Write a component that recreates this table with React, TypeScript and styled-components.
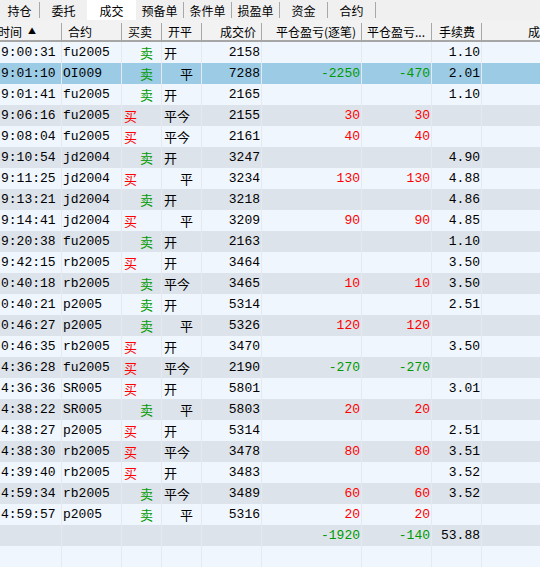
import React from "react";
import styled, { createGlobalStyle } from "styled-components";

const Global = createGlobalStyle`
  html, body { margin: 0; padding: 0; background: #ffffff; overflow: hidden; }
  body { width: 540px; height: 567px; }
`;

const Page = styled.div`
  width: 540px;
  height: 567px;
  overflow: hidden;
  display: flex;
  flex-direction: column;
  background: #f0f6fd;
`;

const TabBar = styled.div`
  display: flex;
  align-items: stretch;
  height: 21px;
  background: #f0f0f0;
  font-family: "Noto Sans CJK SC", sans-serif;
  font-size: 12px;
  color: #000;
`;

const Tab = styled.div<{ $w: number; $active?: boolean }>`
  width: ${(p) => p.$w}px;
  flex: none;
  display: flex;
  align-items: center;
  justify-content: center;
  background: ${(p) => (p.$active ? "#ffffff" : "transparent")};
  padding-top: 1px;
`;

const TabSep = styled.div`
  width: 1px;
  flex: none;
  align-self: center;
  height: 16px;
  margin-top: 1px;
  background: #a8a8a8;
`;

const COLS = "62px 60px 40px 40px 60px 100px 70px 50px 1fr";

const Header = styled.div`
  display: grid;
  grid-template-columns: ${COLS};
  height: 22px;
  padding-top: 0;
  background: #f2f2f2;
  border-bottom: 2px solid #a6a6a6;
  font-family: "Noto Sans CJK SC", sans-serif;
  font-size: 12px;
  color: #000;
`;

const HCell = styled.div<{ $align?: "left" | "right"; $pl?: number; $pr?: number }>`
  display: flex;
  align-items: center;
  justify-content: ${(p) => (p.$align === "right" ? "flex-end" : "flex-start")};
  padding-left: ${(p) => p.$pl ?? 6}px;
  padding-right: ${(p) => p.$pr ?? 5}px;
  margin-top: 3px;
  border-right: 1px solid #a8a8a8;
  white-space: nowrap;
  overflow: hidden;
  &:last-child { border-right: none; }
`;

const SortArrow = styled.span`
  font-size: 8px;
  margin-left: 6px;
  margin-top: -2px;
`;

const Body = styled.div`
  display: flex;
  flex-direction: column;
`;

const Row = styled.div<{ $alt: boolean; $sel?: boolean }>`
  display: grid;
  grid-template-columns: ${COLS};
  height: 21px;
  background: ${(p) => (p.$sel ? "#9ccbe6" : p.$alt ? "#dde3ea" : "#f0f6fd")};
  font-family: "Liberation Mono", "Noto Sans CJK SC", monospace;
  font-size: 13px;
  color: #000;
`;

const Cell = styled.div<{ $align?: "left" | "right"; $color?: string; $indent?: boolean }>`
  display: flex;
  align-items: center;
  justify-content: ${(p) => (p.$align === "right" ? "flex-end" : "flex-start")};
  padding-left: ${(p) => (p.$indent ? 17 : 1)}px;
  padding-right: 1px;
  padding-bottom: 1px;
  border-right: 1px solid #e6eaef;
  white-space: nowrap;
  overflow: hidden;
  color: ${(p) => p.$color ?? "#000"};
  &:last-child { border-right: none; }
`;

const CjkCell = styled(Cell)`
  font-family: "Noto Sans CJK SC", sans-serif;
  padding-left: ${(p) => (p.$indent ? 18 : 2)}px;
`;

const RED = "#ff0000";
const GREEN = "#009a00";

type Trade = [string, string, "买" | "卖", "开" | "平" | "平今", string, string, string, string];

const trades: Trade[] = [
  ["9:00:31", "fu2005", "卖", "开", "2158", "", "", "1.10"],
  ["9:01:10", "OI009", "卖", "平", "7288", "-2250", "-470", "2.01"],
  ["9:01:41", "fu2005", "卖", "开", "2165", "", "", "1.10"],
  ["9:06:16", "fu2005", "买", "平今", "2155", "30", "30", ""],
  ["9:08:04", "fu2005", "买", "平今", "2161", "40", "40", ""],
  ["9:10:54", "jd2004", "卖", "开", "3247", "", "", "4.90"],
  ["9:11:25", "jd2004", "买", "平", "3234", "130", "130", "4.88"],
  ["9:13:21", "jd2004", "卖", "开", "3218", "", "", "4.86"],
  ["9:14:41", "jd2004", "买", "平", "3209", "90", "90", "4.85"],
  ["9:20:38", "fu2005", "卖", "开", "2163", "", "", "1.10"],
  ["9:42:15", "rb2005", "买", "开", "3464", "", "", "3.50"],
  ["0:40:18", "rb2005", "卖", "平今", "3465", "10", "10", "3.50"],
  ["0:40:21", "p2005", "卖", "开", "5314", "", "", "2.51"],
  ["0:46:27", "p2005", "卖", "平", "5326", "120", "120", ""],
  ["0:46:35", "rb2005", "买", "开", "3470", "", "", "3.50"],
  ["4:36:28", "fu2005", "买", "平今", "2190", "-270", "-270", ""],
  ["4:36:36", "SR005", "买", "开", "5801", "", "", "3.01"],
  ["4:38:22", "SR005", "卖", "平", "5803", "20", "20", ""],
  ["4:38:27", "p2005", "买", "开", "5314", "", "", "2.51"],
  ["4:38:30", "rb2005", "买", "平今", "3478", "80", "80", "3.51"],
  ["4:39:40", "rb2005", "买", "开", "3483", "", "", "3.52"],
  ["4:59:34", "rb2005", "卖", "平今", "3489", "60", "60", "3.52"],
  ["4:59:57", "p2005", "卖", "平", "5316", "20", "20", ""],
];

const pnlColor = (v: string) => (v.startsWith("-") ? GREEN : RED);

const tabs = [
  { t: "持仓", w: 39 },
  { t: "委托", w: 47 },
  { t: "成交", w: 49, active: true },
  { t: "预备单", w: 47 },
  { t: "条件单", w: 47 },
  { t: "损盈单", w: 47 },
  { t: "资金", w: 47 },
  { t: "合约", w: 47 },
];

export default function App() {
  return (
    <Page>
      <Global />
      <TabBar>
        {tabs.map((tb, i) => {
          const next = tabs[i + 1];
          const showSep = !tb.active && !(next && next.active);
          return (
            <React.Fragment key={tb.t}>
              <Tab $w={tb.w} $active={tb.active}>
                {tb.t}
              </Tab>
              {showSep && <TabSep />}
            </React.Fragment>
          );
        })}
      </TabBar>
      <Header>
        <HCell $pl={0} style={{ textIndent: 0 }}>
          <span style={{ marginLeft: -2 }}>时间</span>
          <SortArrow>▲</SortArrow>
        </HCell>
        <HCell>合约</HCell>
        <HCell>买卖</HCell>
        <HCell>开平</HCell>
        <HCell $align="right">成交价</HCell>
        <HCell $align="right">平仓盈亏(逐笔)</HCell>
        <HCell $pl={5} $pr={4}>平仓盈亏...</HCell>
        <HCell $align="right" $pr={6}>手续费</HCell>
        <HCell $pl={46}>成交编号</HCell>
      </Header>
      <Body>
        {trades.map((r, i) => (
          <Row key={i} $alt={i % 2 === 1} $sel={i === 1}>
            <Cell>{r[0]}</Cell>
            <Cell>{r[1]}</Cell>
            <CjkCell $color={r[2] === "买" ? RED : GREEN} $indent={r[2] === "卖"}>
              {r[2]}
            </CjkCell>
            <CjkCell $indent={r[3] === "平"}>{r[3]}</CjkCell>
            <Cell $align="right">{r[4]}</Cell>
            <Cell $align="right" $color={pnlColor(r[5])}>{r[5]}</Cell>
            <Cell $align="right" $color={pnlColor(r[6])}>{r[6]}</Cell>
            <Cell $align="right">{r[7]}</Cell>
            <Cell />
          </Row>
        ))}
        <Row $alt={true}>
          <Cell />
          <Cell />
          <Cell />
          <Cell />
          <Cell />
          <Cell $align="right" $color={GREEN}>-1920</Cell>
          <Cell $align="right" $color={GREEN}>-140</Cell>
          <Cell $align="right">53.88</Cell>
          <Cell />
        </Row>
        <Row $alt={false}>
          <Cell />
          <Cell />
          <Cell />
          <Cell />
          <Cell />
          <Cell />
          <Cell />
          <Cell />
          <Cell />
        </Row>
      </Body>
    </Page>
  );
}
